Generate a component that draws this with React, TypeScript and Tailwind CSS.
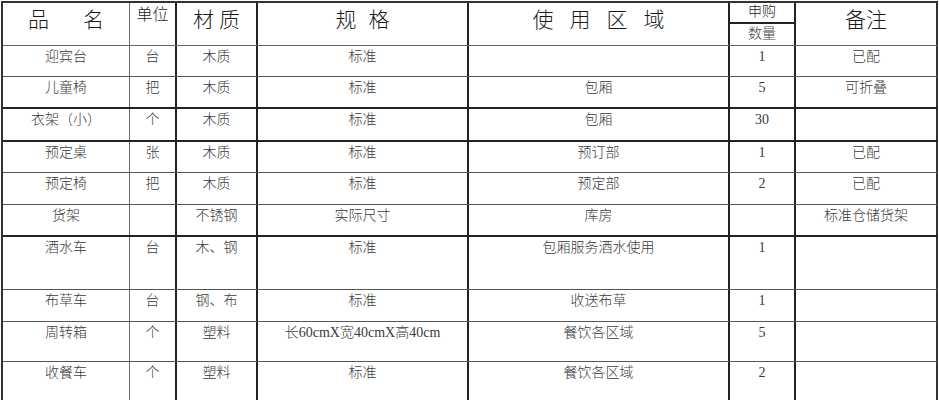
import React from 'react';

const gridCols = 'grid grid-cols-[127px_47px_81px_211px_261px_66px_142px]';

// right border of each column (last one is the table edge)
const colBorder = [
  'border-r border-[#6b6b6b]',
  'border-r-2 border-[#222]',
  'border-r-2 border-[#222]',
  'border-r-2 border-[#222]',
  'border-r-2 border-[#222]',
  'border-r-2 border-[#222]',
  'border-r-2 border-[#333]',
];

type Row = {
  cells: string[];
  h: string;
  line: string;
};

const thin = 'border-b border-[#555]';
const thick = 'border-b-2 border-[#222]';

const rows: Row[] = [
  { cells: ['迎宾台', '台', '木质', '标准', '', '1', '已配'], h: 'h-[31px]', line: thin },
  { cells: ['儿童椅', '把', '木质', '标准', '包厢', '5', '可折叠'], h: 'h-[32px]', line: thick },
  { cells: ['衣架（小）', '个', '木质', '标准', '包厢', '30', ''], h: 'h-[33px]', line: thick },
  { cells: ['预定桌', '张', '木质', '标准', '预订部', '1', '已配'], h: 'h-[31px]', line: thin },
  { cells: ['预定椅', '把', '木质', '标准', '预定部', '2', '已配'], h: 'h-[32px]', line: thin },
  { cells: ['货架', '', '不锈钢', '实际尺寸', '库房', '', '标准仓储货架'], h: 'h-[32px]', line: thick },
  { cells: ['酒水车', '台', '木、钢', '标准', '包厢服务酒水使用', '1', ''], h: 'h-[53px]', line: thin },
  { cells: ['布草车', '台', '钢、布', '标准', '收送布草', '1', ''], h: 'h-[32px]', line: thin },
  { cells: ['周转箱', '个', '塑料', '长60cmX宽40cmX高40cm', '餐饮各区域', '5', ''], h: 'h-[40px]', line: thin },
  { cells: ['收餐车', '个', '塑料', '标准', '餐饮各区域', '2', ''], h: 'h-[44px]', line: thin },
];

function HeaderRow() {
  const head = 'text-center text-[#1a1a1a] font-light';
  return (
    <div className={`${gridCols} h-[43px] border-b border-[#666]`}>
      <div className={`${colBorder[0]} ${head} pt-[5px] text-[21px] leading-[24px]`}>
        品<span className="inline-block w-[34px]" />名
      </div>
      <div className={`${colBorder[1]} ${head} pt-[1px] text-[16px] leading-[22px]`}>单位</div>
      <div className={`${colBorder[2]} ${head} pt-[5px] text-[21px] leading-[24px] tracking-[5px] pl-[5px]`}>
        材质
      </div>
      <div className={`${colBorder[3]} ${head} pt-[5px] text-[21px] leading-[24px] tracking-[12px] pl-[12px]`}>
        规格
      </div>
      <div className={`${colBorder[4]} ${head} pt-[5px] text-[21px] leading-[24px] tracking-[16px] pl-[16px]`}>
        使用区域
      </div>
      <div className={`${colBorder[5]} flex flex-col`}>
        <div className={`h-[21px] border-b-2 border-[#222] ${head} text-[14px] leading-[18px]`}>申购</div>
        <div className={`${head} text-[14px] leading-[20px] text-[#444]`}>数量</div>
      </div>
      <div className={`${colBorder[6]} ${head} pt-[5px] text-[21px] leading-[24px]`}>备注</div>
    </div>
  );
}

export default function App() {
  return (
    <div className="min-h-screen bg-white font-['Liberation_Serif','Noto_Sans_CJK_SC',serif]">
      <div className="ml-[1px] mt-[1px] w-[937px] border-l-2 border-t-2 border-[#333]">
        <HeaderRow />
        {rows.map((r, i) => (
          <div key={i} className={`${gridCols} ${r.h} ${r.line}`}>
            {r.cells.map((c, j) => (
              <div
                key={j}
                className={`${colBorder[j]} pt-[1px] text-center text-[14px] font-light leading-[20px] text-[#3a3a3a] whitespace-nowrap`}
              >
                {c}
              </div>
            ))}
          </div>
        ))}
      </div>
    </div>
  );
}
